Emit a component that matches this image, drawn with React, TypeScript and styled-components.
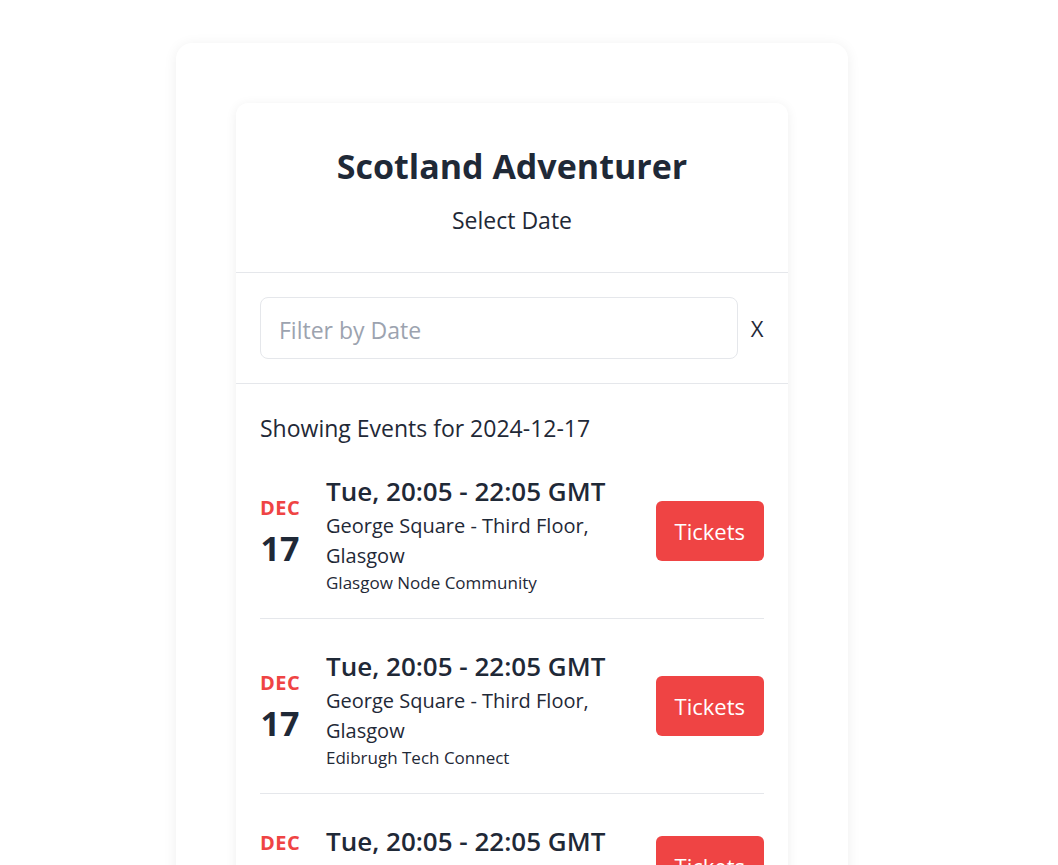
import React from "react";
import styled, { createGlobalStyle } from "styled-components";

const GlobalStyle = createGlobalStyle`
  html, body { margin: 0; padding: 0; background: #ffffff; }
  body {
    font-family: "Open Sans", "Noto Sans", sans-serif;
    color: #1f2937;
    -webkit-font-smoothing: antialiased;
  }
  * { box-sizing: border-box; }
`;

const Container = styled.div`
  width: 1024px;
  padding-top: 43px;
`;

const OuterCard = styled.div`
  width: 672px;
  margin: 0 auto;
  padding: 60px 60px 0;
  background: #ffffff;
  border-radius: 16px 16px 0 0;
  box-shadow: 0 2px 14px rgba(0, 0, 0, 0.07);
  min-height: 840px;
`;

const InnerCard = styled.div`
  background: #ffffff;
  border-radius: 12px 12px 0 0;
  box-shadow: 0 2px 12px rgba(0, 0, 0, 0.07);
  min-height: 780px;
`;

const Header = styled.header`
  padding: 43px 24px 36px;
  text-align: center;
  border-bottom: 1px solid #e5e7eb;
`;

const Title = styled.h1`
  margin: 0;
  font-size: 34px;
  line-height: 40px;
  font-weight: 700;
  color: #1f2937;
`;

const Subtitle = styled.p`
  margin: 18px 0 0;
  font-size: 23px;
  line-height: 32px;
  color: #1f2937;
`;

const FilterBar = styled.div`
  display: flex;
  align-items: center;
  gap: 12px;
  padding: 24px;
  border-bottom: 1px solid #e5e7eb;
`;

const DateInput = styled.input`
  flex: 1;
  height: 62px;
  padding: 3px 18px 0;
  border: 1px solid #e5e7eb;
  border-radius: 8px;
  font-family: inherit;
  font-size: 23px;
  color: #1f2937;
  outline: none;
  &::placeholder { color: #9ca3af; }
`;

const ClearButton = styled.button`
  border: none;
  background: none;
  padding: 0;
  width: 14px;
  font-family: inherit;
  font-size: 22px;
  color: #1f2937;
  cursor: pointer;
`;

const EventsSection = styled.section`
  padding: 28px 24px 0;
`;

const ShowingLabel = styled.h2`
  margin: 0;
  font-size: 23px;
  line-height: 32px;
  font-weight: 400;
`;

const EventList = styled.ul`
  list-style: none;
  margin: 0;
  padding: 0;
`;

const EventRow = styled.li`
  display: flex;
  align-items: center;
  padding: 27px 0 23px;
  border-bottom: 1px solid #e5e7eb;
`;

const DateBlock = styled.div`
  width: 40px;
  margin-right: 26px;
  margin-top: 6px;
  display: flex;
  flex-direction: column;
  align-items: center;
`;

const Month = styled.span`
  font-size: 20px;
  line-height: 24px;
  font-weight: 700;
  letter-spacing: 0.5px;
  color: #ef4444;
`;

const Day = styled.span`
  font-size: 34px;
  line-height: 56px;
  font-weight: 700;
  color: #1f2937;
`;

const Info = styled.div`
  flex: 1;
  min-width: 0;
  padding-right: 20px;
`;

const Time = styled.div`
  font-size: 26px;
  line-height: 40px;
  font-weight: 600;
  white-space: nowrap;
`;

const Location = styled.div`
  font-size: 20px;
  line-height: 30px;
`;

const Organiser = styled.div`
  font-size: 17px;
  line-height: 24px;
`;

const TicketButton = styled.button`
  flex: none;
  height: 60px;
  padding: 0 19px;
  margin-bottom: 4px;
  border: none;
  border-radius: 6px;
  background: #ef4444;
  color: #ffffff;
  font-family: inherit;
  font-size: 22px;
  cursor: pointer;
`;

type EventItem = {
  month: string;
  day: string;
  time: string;
  location: string;
  organiser: string;
};

const events: EventItem[] = [
  {
    month: "DEC",
    day: "17",
    time: "Tue, 20:05 - 22:05 GMT",
    location: "George Square - Third Floor, Glasgow",
    organiser: "Glasgow Node Community",
  },
  {
    month: "DEC",
    day: "17",
    time: "Tue, 20:05 - 22:05 GMT",
    location: "George Square - Third Floor, Glasgow",
    organiser: "Edibrugh Tech Connect",
  },
  {
    month: "DEC",
    day: "17",
    time: "Tue, 20:05 - 22:05 GMT",
    location: "George Square, Glasgow",
    organiser: "Glasgow Node Community",
  },
];

export default function App() {
  return (
    <>
      <GlobalStyle />
      <Container>
        <OuterCard>
          <InnerCard>
            <Header>
              <Title>Scotland Adventurer</Title>
              <Subtitle>Select Date</Subtitle>
            </Header>
            <FilterBar>
              <DateInput placeholder="Filter by Date" />
              <ClearButton>X</ClearButton>
            </FilterBar>
            <EventsSection>
              <ShowingLabel>Showing Events for 2024-12-17</ShowingLabel>
              <EventList>
                {events.map((e, i) => (
                  <EventRow key={i}>
                    <DateBlock>
                      <Month>{e.month}</Month>
                      <Day>{e.day}</Day>
                    </DateBlock>
                    <Info>
                      <Time>{e.time}</Time>
                      <Location>{e.location}</Location>
                      <Organiser>{e.organiser}</Organiser>
                    </Info>
                    <TicketButton>Tickets</TicketButton>
                  </EventRow>
                ))}
              </EventList>
            </EventsSection>
          </InnerCard>
        </OuterCard>
      </Container>
    </>
  );
}
